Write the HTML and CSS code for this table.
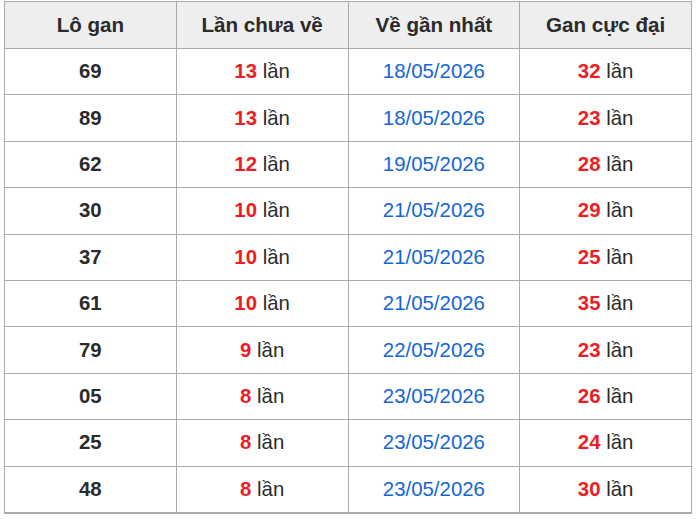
FILE: index.html
```html
<!DOCTYPE html>
<html lang="vi">
<head>
<meta charset="utf-8">
<link rel="stylesheet" href="styles.css">
</head>
<body>
<table class="gan">
<thead>
<tr><th>Lô gan</th><th>Lần chưa về</th><th>Về gần nhất</th><th>Gan cực đại</th></tr>
</thead>
<tbody>
<tr><td class="num">69</td><td><b class="red">13</b> lần</td><td class="date">18/05/2026</td><td><b class="red">32</b> lần</td></tr>
<tr><td class="num">89</td><td><b class="red">13</b> lần</td><td class="date">18/05/2026</td><td><b class="red">23</b> lần</td></tr>
<tr><td class="num">62</td><td><b class="red">12</b> lần</td><td class="date">19/05/2026</td><td><b class="red">28</b> lần</td></tr>
<tr><td class="num">30</td><td><b class="red">10</b> lần</td><td class="date">21/05/2026</td><td><b class="red">29</b> lần</td></tr>
<tr><td class="num">37</td><td><b class="red">10</b> lần</td><td class="date">21/05/2026</td><td><b class="red">25</b> lần</td></tr>
<tr><td class="num">61</td><td><b class="red">10</b> lần</td><td class="date">21/05/2026</td><td><b class="red">35</b> lần</td></tr>
<tr><td class="num">79</td><td><b class="red">9</b> lần</td><td class="date">22/05/2026</td><td><b class="red">23</b> lần</td></tr>
<tr><td class="num">05</td><td><b class="red">8</b> lần</td><td class="date">23/05/2026</td><td><b class="red">26</b> lần</td></tr>
<tr><td class="num">25</td><td><b class="red">8</b> lần</td><td class="date">23/05/2026</td><td><b class="red">24</b> lần</td></tr>
<tr><td class="num">48</td><td><b class="red">8</b> lần</td><td class="date">23/05/2026</td><td><b class="red">30</b> lần</td></tr>
</tbody>
</table>
</body>
</html>
```
FILE: styles.css
```css
html, body {
  margin: 0;
  padding: 0;
  background: #ffffff;
}
body {
  font-family: "Liberation Sans", Arial, Helvetica, sans-serif;
  color: #2b2b2b;
}
.gan {
  margin: 1px 0 0 4px;
  width: 688px;
  border-collapse: collapse;
  table-layout: fixed;
  font-size: 20.4px;
}
.gan th,
.gan td {
  border: 1px solid #aaaaaa;
  text-align: center;
  vertical-align: middle;
  padding: 0;
}
.gan th {
  background: #eeeeee;
  font-weight: bold;
  font-size: 20.6px;
  height: 46px;
  color: #2b2b2b;
}
.gan td {
  height: 45.4px;
}
.gan tbody tr:last-child td {
  border-bottom: 2px solid #aaaaaa;
}
.num {
  font-weight: bold;
}
.red {
  color: #ee1c25;
  font-weight: bold;
}
.date {
  color: #1466d6;
}
```
